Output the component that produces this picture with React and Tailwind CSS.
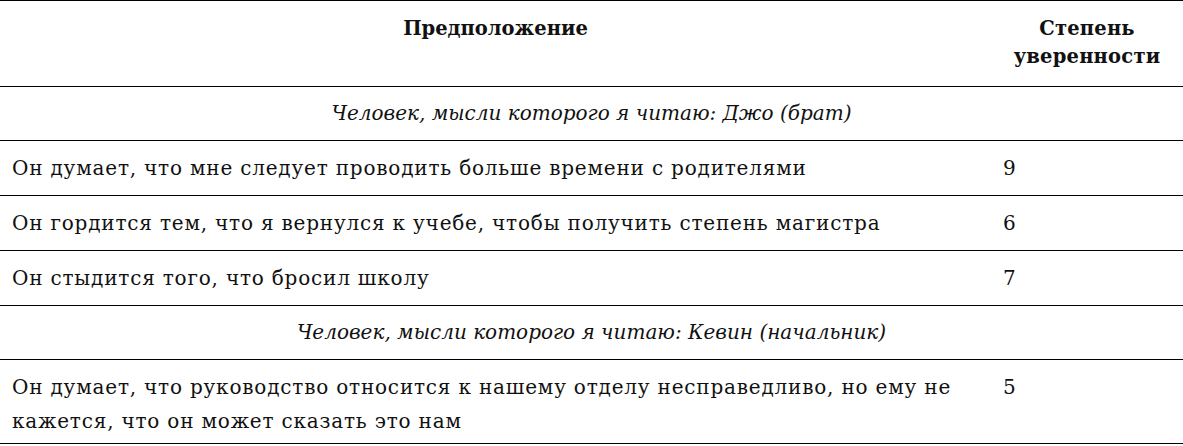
const groups = [
  {
    person: 'Человек, мысли которого я читаю: Джо (брат)',
    rows: [
      ['Он думает, что мне следует проводить больше времени с родителями', '9'],
      ['Он гордится тем, что я вернулся к учебе, чтобы получить степень магистра', '6'],
      ['Он стыдится того, что бросил школу', '7'],
    ],
  },
  {
    person: 'Человек, мысли которого я читаю: Кевин (начальник)',
    rows: [
      [
        'Он думает, что руководство относится к нашему отделу несправедливо, но ему не кажется, что он может сказать это нам',
        '5',
        true,
      ],
    ],
  },
]

export default function App() {
  return (
    <div className="w-[1183px] bg-white font-['DejaVu_Serif',serif] text-[#111]">
      <div className="grid grid-cols-[991px_1fr] border-t border-black">
        <div className="border-b border-black pt-[14px] pb-[15px] text-center text-[19.5px] font-bold leading-[28px]">
          Предположение
        </div>
        <div className="border-b border-black pt-[14px] pb-[15px] text-center text-[19.5px] font-bold leading-[28px] tracking-[0.2px]">
          Степень
          <br />
          уверенности
        </div>

        {groups.map(group => (
          <Group key={group.person} {...group} />
        ))}
      </div>
    </div>
  )
}

function Group({ person, rows }) {
  return (
    <>
      <div className="col-span-2 border-b border-black py-[10px] text-center text-[20px] italic leading-[33px]">
        {person}
      </div>
      {rows.map(([text, score, wrapped]) => (
        <div
          key={text}
          className={
            'col-span-2 grid grid-cols-subgrid border-b border-black pt-[10px] ' +
            (wrapped ? 'pb-[5px]' : 'pb-[10px]')
          }
        >
          <div className="pl-[12px] pr-[20px] text-[20px] leading-[34px] tracking-[0.8px]">{text}</div>
          <div className="pl-[12px] text-[20px] leading-[34px]">{score}</div>
        </div>
      ))}
    </>
  )
}
